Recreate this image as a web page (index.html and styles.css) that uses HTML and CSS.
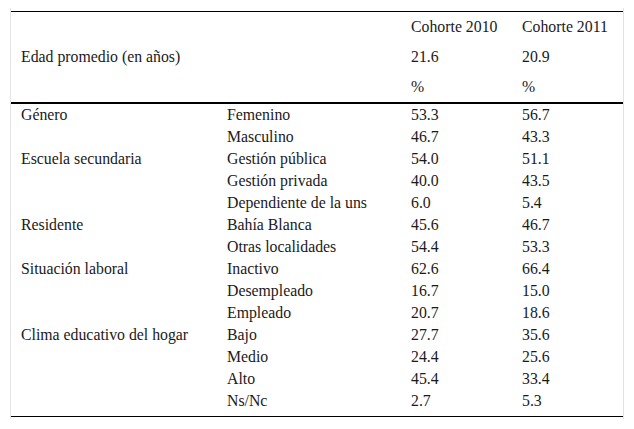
FILE: index.html
```html
<!DOCTYPE html>
<html lang="es">
<head>
<meta charset="utf-8">
<title>Tabla</title>
<link rel="stylesheet" href="styles.css">
</head>
<body>
<div class="wrap">
<table class="data">
<colgroup>
<col class="c1"><col class="c2"><col class="c3"><col class="c4">
</colgroup>
<thead>
<tr><td></td><td></td><td>Cohorte 2010</td><td>Cohorte 2011</td></tr>
<tr><td>Edad promedio (en años)</td><td></td><td>21.6</td><td>20.9</td></tr>
<tr class="last"><td></td><td></td><td>%</td><td>%</td></tr>
</thead>
<tbody>
<tr><td>Género</td><td>Femenino</td><td>53.3</td><td>56.7</td></tr>
<tr><td></td><td>Masculino</td><td>46.7</td><td>43.3</td></tr>
<tr><td>Escuela secundaria</td><td>Gestión pública</td><td>54.0</td><td>51.1</td></tr>
<tr><td></td><td>Gestión privada</td><td>40.0</td><td>43.5</td></tr>
<tr><td></td><td>Dependiente de la uns</td><td>6.0</td><td>5.4</td></tr>
<tr><td>Residente</td><td>Bahía Blanca</td><td>45.6</td><td>46.7</td></tr>
<tr><td></td><td>Otras localidades</td><td>54.4</td><td>53.3</td></tr>
<tr><td>Situación laboral</td><td>Inactivo</td><td>62.6</td><td>66.4</td></tr>
<tr><td></td><td>Desempleado</td><td>16.7</td><td>15.0</td></tr>
<tr><td></td><td>Empleado</td><td>20.7</td><td>18.6</td></tr>
<tr><td>Clima educativo del hogar</td><td>Bajo</td><td>27.7</td><td>35.6</td></tr>
<tr><td></td><td>Medio</td><td>24.4</td><td>25.6</td></tr>
<tr><td></td><td>Alto</td><td>45.4</td><td>33.4</td></tr>
<tr class="end"><td></td><td>Ns/Nc</td><td>2.7</td><td>5.3</td></tr>
</tbody>
</table>
</div>
</body>
</html>
```
FILE: styles.css
```css
html, body {
  margin: 0;
  padding: 0;
  background: #fff;
}
body {
  padding: 8px 10px 0 10px;
  font-family: "Liberation Serif", "Times New Roman", serif;
  font-size: 15.8px;
  color: #1a1a1a;
}
.wrap {
  width: 612px;
  border-left: 1px solid #e2e2e2;
  border-right: 1px solid #e2e2e2;
  padding: 3px 0 2px 0;
}
.data {
  width: 612px;
  table-layout: fixed;
  border-collapse: separate;
  border-spacing: 0;
  border-top: 1px solid #000;
  border-bottom: 1px solid #000;
}
.c1 { width: 206px; }
.c2 { width: 184px; }
.c3 { width: 111px; }
.c4 { width: 111px; }
.data td {
  padding: 2px 10px;
  line-height: 18px;
  white-space: nowrap;
  vertical-align: middle;
  text-align: left;
}
.data thead td {
  padding-top: 6px;
  padding-bottom: 6px;
}
.data thead tr.last td {
  border-bottom: 2px solid #000;
}
.data tbody tr.end td {
  padding-bottom: 6px;
}
```
